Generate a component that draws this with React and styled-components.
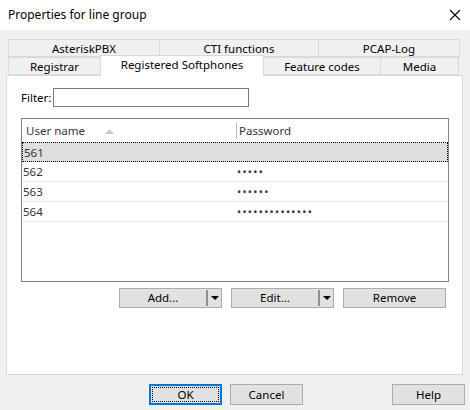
import React from 'react';
import styled, {createGlobalStyle} from 'styled-components';

const GlobalStyle = createGlobalStyle`
    html, body {
        margin: 0;
        padding: 0;
        background: #f0f0f0;
    }
    * {
        box-sizing: border-box;
    }
`;

const topTabs = [
    {label: 'AsteriskPBX', width: 152},
    {label: 'CTI functions', width: 160},
    {label: 'PCAP-Log', width: 142},
];

const bottomTabs = [
    {label: 'Registrar', width: 93},
    {label: 'Registered Softphones', width: 164, active: true},
    {label: 'Feature codes', width: 118},
    {label: 'Media', width: 79},
];

const users = [
    {name: '561', password: '', selected: true},
    {name: '562', password: '•••••'},
    {name: '563', password: '••••••'},
    {name: '564', password: '••••••••••••••'},
];

export default function App() {
    return (
        <Window>
            <GlobalStyle/>
            <TitleBar>
                <Title>Properties for line group</Title>
                <CloseIcon width="12" height="12" viewBox="0 0 12 12">
                    <path d="M1 1 L11 11 M11 1 L1 11" stroke="#000" strokeWidth="1.1"/>
                </CloseIcon>
            </TitleBar>

            <Body>
                <TabStrip>
                    <TabRow>
                        {topTabs.map(tab => (
                            <Tab key={tab.label} $width={tab.width}>{tab.label}</Tab>
                        ))}
                    </TabRow>
                    <TabRow>
                        {bottomTabs.map(tab => (
                            <Tab key={tab.label} $width={tab.width} $active={tab.active}>{tab.label}</Tab>
                        ))}
                    </TabRow>
                </TabStrip>

                <Panel>
                    <FilterRow>
                        <Label>Filter:</Label>
                        <TextInput/>
                    </FilterRow>

                    <List>
                        <HeaderRow>
                            <HeaderCell>
                                User name
                                <SortArrow width="9" height="5" viewBox="0 0 9 5">
                                    <path d="M0 5 L4.5 0 L9 5 Z" fill="#c8c8c8"/>
                                </SortArrow>
                            </HeaderCell>
                            <HeaderCell $divider>Password</HeaderCell>
                        </HeaderRow>
                        {users.map(user => (
                            <Row key={user.name} $selected={user.selected}>
                                <Cell>{user.name}</Cell>
                                <Dots>{user.password}</Dots>
                            </Row>
                        ))}
                    </List>

                    <ActionRow>
                        <Button $width={103}>
                            <SplitLabel>Add...</SplitLabel>
                            <SplitArrow/>
                        </Button>
                        <Button $width={103}>
                            <SplitLabel>Edit...</SplitLabel>
                            <SplitArrow/>
                        </Button>
                        <Button $width={103}>Remove</Button>
                    </ActionRow>
                </Panel>

                <Footer>
                    <DefaultButton>
                        <FocusRing>OK</FocusRing>
                    </DefaultButton>
                    <Button $width={73} $height={21}>Cancel</Button>
                    <Spacer/>
                    <Button $width={73} $height={21}>Help</Button>
                </Footer>
            </Body>
        </Window>
    );
}

function SplitArrow() {
    return (
        <ArrowPart>
            <ArrowSvg width="8" height="4" viewBox="0 0 8 4">
                <path d="M0 0 L8 0 L4 4 Z" fill="#000"/>
            </ArrowSvg>
        </ArrowPart>
    );
}

const Window = styled.div`
    width: 470px;
    height: 410px;
    display: flex;
    flex-direction: column;
    font-family: 'Noto Sans', 'Open Sans', sans-serif;
    font-size: 11.5px;
    color: #000;
    background: #f0f0f0;
    overflow: hidden;
`;

const TitleBar = styled.div`
    height: 30px;
    background: #fff;
    display: flex;
    align-items: center;
    justify-content: space-between;
    padding: 0 8px 0 8px;
`;

const Title = styled.div`
    font-size: 12px;
    padding-bottom: 1px;
`;

const CloseIcon = styled.svg`
    margin-right: 1px;
`;

const Body = styled.div`
    flex: 1;
    display: flex;
    flex-direction: column;
    padding-top: 9px;
`;

const TabStrip = styled.div`
    display: flex;
    flex-direction: column;
    padding-left: 8px;
    position: relative;
    z-index: 1;
`;

const TabRow = styled.div`
    display: flex;
    height: 18px;
`;

const Tab = styled.div`
    width: ${p => p.$width}px;
    height: ${p => p.$active ? 21 : 18}px;
    margin-top: ${p => p.$active ? -2 : 0}px;
    background: ${p => p.$active ? '#fff' : '#f0f0f0'};
    border: 1px solid #d9d9d9;
    border-bottom: ${p => p.$active ? 'none' : '1px solid #d9d9d9'};
    margin-left: -1px;
    display: flex;
    align-items: center;
    justify-content: center;
    padding-bottom: ${p => p.$active ? 3 : 0}px;
    white-space: nowrap;
    &:first-child {
        margin-left: 0;
    }
`;

const Panel = styled.div`
    margin-left: 6px;
    width: 457px;
    height: 300px;
    background: #fff;
    border: 1px solid #d9d9d9;
    display: flex;
    flex-direction: column;
    padding: 12px 0 0 14px;
`;

const FilterRow = styled.div`
    display: flex;
    align-items: center;
    gap: 2px;
    width: 228px;
`;

const Label = styled.span`
    flex-shrink: 0;
    padding-bottom: 1px;
`;

const TextInput = styled.div`
    flex: 1;
    height: 19px;
    border: 1px solid #7a7a7a;
    background: #fff;
`;

const List = styled.div`
    margin-top: 11px;
    width: 428px;
    height: 164px;
    border: 1px solid #828282;
    display: flex;
    flex-direction: column;
`;

const HeaderRow = styled.div`
    display: grid;
    grid-template-columns: 214px 1fr;
    height: 23px;
    align-items: center;
`;

const HeaderCell = styled.div`
    display: flex;
    align-items: center;
    height: 16px;
    padding-left: ${p => p.$divider ? 2 : 4}px;
    color: #333;
    border-left: ${p => p.$divider ? '1px solid #b5b5b5' : 'none'};
`;

const SortArrow = styled.svg`
    margin-left: 20px;
    margin-top: 1px;
`;

const Row = styled.div`
    display: grid;
    grid-template-columns: 214px 1fr;
    height: 20px;
    align-items: center;
    background: ${p => p.$selected ? '#dfdfdf' : '#fff'};
    border: ${p => p.$selected ? '1px dotted #000' : 'none'};
    border-bottom: ${p => p.$selected ? '1px dotted #000' : '1px solid #e6e6e6'};
    color: #333;
`;

const Cell = styled.div`
    padding-left: 1px;
`;

const Dots = styled.div`
    padding-left: 1px;
    font-size: 11px;
    letter-spacing: 1.3px;
    color: #333;
`;

const ActionRow = styled.div`
    display: flex;
    gap: 9px;
    margin-top: 6px;
    padding-left: 98px;
`;

const Button = styled.div`
    width: ${p => p.$width}px;
    height: ${p => p.$height || 20}px;
    background: #e1e1e1;
    border: 1px solid #adadad;
    display: flex;
    align-items: center;
    justify-content: center;
    padding-bottom: 1px;
`;

const SplitLabel = styled.span`
    flex: 1;
    text-align: center;
`;

const ArrowPart = styled.span`
    width: 15px;
    height: 16px;
    border-left: 2px solid #8f8f8f;
    display: flex;
    align-items: center;
    justify-content: center;
`;

const ArrowSvg = styled.svg`
    display: block;
`;

const Footer = styled.div`
    display: flex;
    gap: 8px;
    margin-top: 9px;
    padding-left: 149px;
    padding-right: 5px;
`;

const Spacer = styled.div`
    flex: 1;
`;

const DefaultButton = styled.div`
    width: 73px;
    height: 21px;
    background: #e1e1e1;
    border: 2px solid #0078d7;
    padding: 1px;
`;

const FocusRing = styled.div`
    height: 100%;
    border: 1px dotted #000;
    display: flex;
    align-items: center;
    justify-content: center;
    padding-bottom: 1px;
`;
